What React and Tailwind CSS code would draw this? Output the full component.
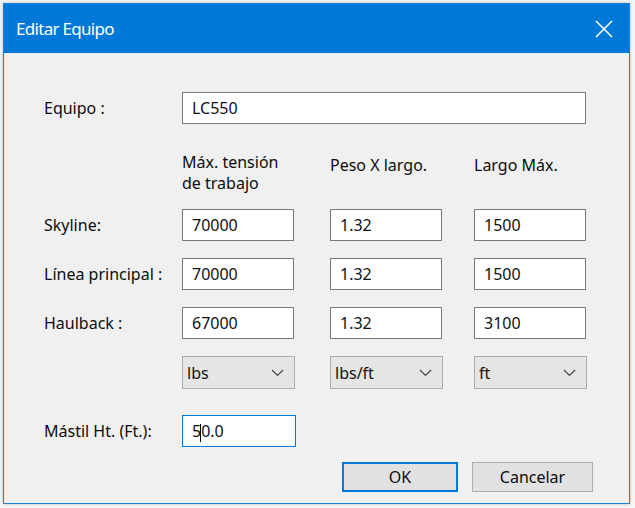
import React from "react";

const font = { fontFamily: '"Noto Sans", "Liberation Sans", sans-serif' };

function TextBox({ value, focused, w = "w-[112px]" }) {
  return (
    <div
      className={`${w} h-[32px] bg-white flex items-center pl-[9px] text-[16px] text-[#111] ${
        focused ? "border border-[#0078d7]" : "border border-[#7a7a7a]"
      }`}
    >
      {focused ? (
        <span className="relative">
          5<span className="inline-block w-[1px] h-[18px] bg-black align-middle -ml-[1px] mr-[0px]" />0.0
        </span>
      ) : (
        value
      )}
    </div>
  );
}

function Select({ value }) {
  return (
    <div className="w-[113px] h-[33px] bg-[#e5e5e5] border border-[#adadad] flex items-center justify-between pl-[4px] pr-[10px] text-[16px] text-[#111]">
      <span>{value}</span>
      <svg width="13" height="8" viewBox="0 0 13 8">
        <path d="M1 1 L6.5 6.5 L12 1" fill="none" stroke="#444" strokeWidth="1.2" />
      </svg>
    </div>
  );
}

export default function App() {
  return (
    <div className="w-[635px] h-[508px] bg-[#f6f6f6] pt-[3px] pl-[3px]" style={font}>
      <div className="w-[627px] h-[501px] border border-[#1883d7] bg-[#f0f0f0] flex flex-col shadow-[0_0_3px_rgba(0,0,0,0.25)]">
        <div className="h-[49px] bg-[#0078d7] flex items-center justify-between pl-[12px] pr-[16px]">
          <span className="text-white text-[17px] tracking-[-0.7px]">Editar Equipo</span>
          <svg width="18" height="18" viewBox="0 0 18 18">
            <path d="M1 1 L17 17 M17 1 L1 17" stroke="white" strokeWidth="1.6" />
          </svg>
        </div>
        <div className="flex-1 pl-[40px] pt-[39px] text-[16px] text-[#0d0d0d]">
          <div className="flex items-center h-[32px]">
            <span className="w-[138px]">Equipo :</span>
            <TextBox value="LC550" w="w-[404px]" />
          </div>

          <div className="grid grid-cols-[138px_148px_144px_112px] mt-[28px] leading-[21px]">
            <div />
            <div>Máx. tensión<br />de trabajo</div>
            <div className="pt-[3px]">Peso X largo.</div>
            <div className="pt-[3px]">Largo Máx.</div>
          </div>

          <div className="grid grid-cols-[138px_148px_144px_112px] grid-rows-[32px_32px_32px_33px] gap-y-[17px] mt-[15px] items-center">
            <span>Skyline:</span>
            <TextBox value="70000" />
            <TextBox value="1.32" />
            <TextBox value="1500" />

            <span>Línea principal :</span>
            <TextBox value="70000" />
            <TextBox value="1.32" />
            <TextBox value="1500" />

            <span>Haulback :</span>
            <TextBox value="67000" />
            <TextBox value="1.32" />
            <TextBox value="3100" />

            <div />
            <Select value="lbs" />
            <Select value="lbs/ft" />
            <Select value="ft" />
          </div>

          <div className="flex items-center h-[32px] mt-[26px]">
            <span className="w-[138px]">Mástil Ht. (Ft.):</span>
            <TextBox focused w="w-[114px]" />
          </div>

          <div className="flex mt-[15px] ml-[298px] gap-[14px]">
            <div className="w-[116px] h-[30px] bg-[#e1e1e1] border-2 border-[#0078d7] flex items-center justify-center">
              OK
            </div>
            <div className="w-[121px] h-[30px] bg-[#e1e1e1] border border-[#adadad] flex items-center justify-center">
              Cancelar
            </div>
          </div>
        </div>
      </div>
    </div>
  );
}
